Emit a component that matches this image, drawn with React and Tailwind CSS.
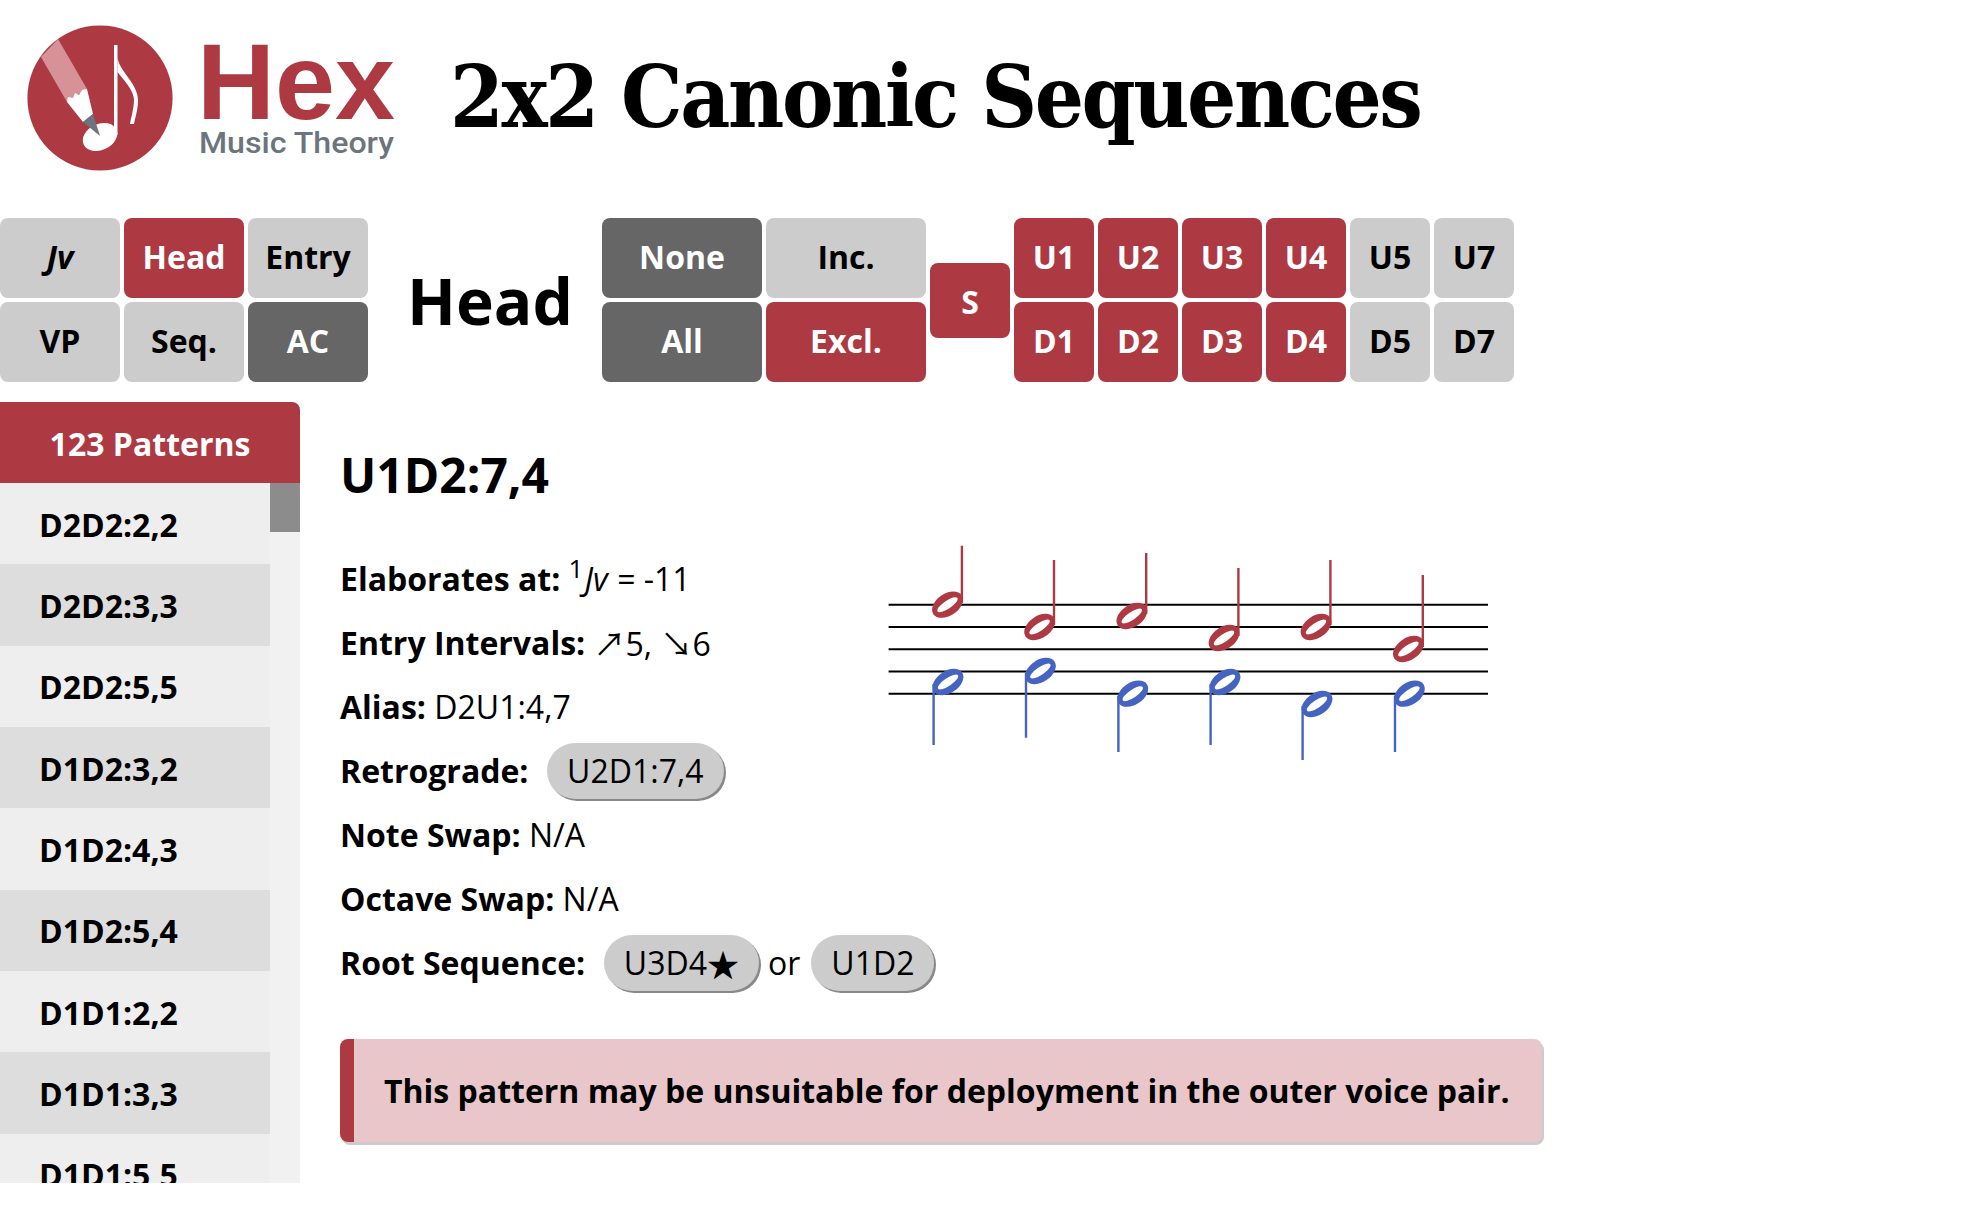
import React from 'react';

const RED = '#ad3a43';
const BLUE = '#4563c0';
const SANS = "font-['Open_Sans','Noto_Sans',sans-serif]";
const CJK = "font-['Noto_Sans_CJK_SC',sans-serif]";

const PATTERNS = [
  'D2D2:2,2', 'D2D2:3,3', 'D2D2:5,5', 'D1D2:3,2', 'D1D2:4,3',
  'D1D2:5,4', 'D1D1:2,2', 'D1D1:3,3', 'D1D1:5,5',
];

// cx/cy = notehead center, end = far end of the stem
const RED_NOTES = [
  { cx: 947.5, cy: 603.7, end: 544.7 },
  { cx: 1039.6, cy: 626, end: 559 },
  { cx: 1131.8, cy: 615, end: 552 },
  { cx: 1224, cy: 637, end: 567 },
  { cx: 1316, cy: 626, end: 559 },
  { cx: 1408.4, cy: 648, end: 574 },
];
const BLUE_NOTES = [
  { cx: 948, cy: 681, end: 744 },
  { cx: 1040.4, cy: 670, end: 736.7 },
  { cx: 1132.8, cy: 692.7, end: 751 },
  { cx: 1225, cy: 681, end: 744 },
  { cx: 1317, cy: 703, end: 759 },
  { cx: 1409.4, cy: 692.7, end: 751 },
];

const Logo = () => (
  <svg width="420" height="194" viewBox="0 0 420 194" className="shrink-0">
    <circle cx="100" cy="98" r="72.6" fill={RED} />
    <path d="M58 39 L41 57 L67 102 L87 89 Z" fill="#d69297" />
    <ellipse cx="100" cy="137" rx="18" ry="13" transform="rotate(-25 100 137)" fill="#fff" />
    <rect x="114" y="45" width="3.5" height="90" fill="#fff" />
    <path d="M117.5 58 C120 72 138 84 138 100 C138 110 135 118 134 124 L130 124 C131 118 134 108 134 100 C134 90 122 78 117.5 72 Z" fill="#fff" />
    <path d="M67 102 L68 97 L73 98 L75 93 L79 95 L82 90 L87 89 L93 114 L83 122 Z" fill="#fff" />
    <path d="M83 122 L93 114 L100 136 Z" fill="#6b757d" />
    <text x="197" y="119" fill={RED} fontSize="108" fontWeight="700" textLength="198" lengthAdjust="spacingAndGlyphs" fontFamily="'Liberation Sans', sans-serif">Hex</text>
    <text x="199" y="153" fill="#6b757d" fontSize="29" fontWeight="500" textLength="195" lengthAdjust="spacingAndGlyphs" fontFamily="Roboto, sans-serif">Music Theory</text>
  </svg>
);

const Btn = ({ label, tone = 'off', pad = 'pb-[3px]', className = '' }) => {
  const tones = {
    off: 'bg-[#cccccc] text-black',
    on: 'bg-[#ad3a43] text-white',
    dark: 'bg-[#666666] text-white',
  };
  return (
    <div className={`flex items-center justify-center rounded-lg text-[32px] font-bold ${pad} ${tones[tone]} ${className}`}>
      {label}
    </div>
  );
};

const Pill = ({ children }) => (
  <span className="ml-[2px] inline-flex h-14 items-center rounded-[28px] bg-[#cccccc] px-5 shadow-[2px_2px_0_#888888]">{children}</span>
);

const Line = ({ label, children }) => (
  <div className="flex h-16 items-center whitespace-pre">
    <b className="font-bold">{label}</b>
    {children}
  </div>
);

const HalfNote = ({ cx, cy, end, color, up }) => {
  const stemX = up ? cx + 14.4 : cx - 14.4;
  return (
    <g>
      <line x1={stemX} y1={cy + (up ? -2 : 2)} x2={stemX} y2={end} stroke={color} strokeWidth="2.4" />
      <g transform={`translate(${cx} ${cy}) rotate(-34)`}>
        <ellipse rx="17" ry="11" fill={color} />
        <ellipse rx="12" ry="4" fill="#fff" />
      </g>
    </g>
  );
};

const Staff = () => (
  <svg width="640" height="240" viewBox="860 530 640 240" className="shrink-0">
    {[603.7, 626, 648.2, 670.4, 692.7].map((y) => (
      <line key={y} x1="888.6" x2="1488" y1={y} y2={y} stroke="#000" strokeWidth="2" />
    ))}
    {RED_NOTES.map((n) => <HalfNote key={n.cx} {...n} color={RED} up />)}
    {BLUE_NOTES.map((n) => <HalfNote key={n.cx} {...n} color={BLUE} />)}
  </svg>
);

export default function App() {
  return (
    <div className={`${SANS} h-[1217px] bg-white text-black`}>
      <header className="flex h-[194px] items-center">
        <Logo />
        <h1 className="ml-[30px] whitespace-nowrap font-['DejaVu_Serif_Condensed','DejaVu_Serif',serif] text-[86px] font-bold leading-none tracking-[-2.4px]">
          2x2 Canonic Sequences
        </h1>
      </header>

      <div className="mt-6 flex h-[164px] items-center">
        <div className="grid grid-cols-[repeat(3,120px)] grid-rows-[repeat(2,80px)] gap-1">
          <Btn label={<i>Jv</i>} />
          <Btn label="Head" tone="on" />
          <Btn label="Entry" />
          <Btn label="VP" />
          <Btn label="Seq." />
          <Btn label="AC" tone="dark" />
        </div>
        <div className="w-[234px] pl-[10px] pt-[2px] text-center text-[64px] font-bold">Head</div>
        <div className="grid grid-cols-[repeat(2,160px)] grid-rows-[repeat(2,80px)] gap-1">
          <Btn label="None" tone="dark" />
          <Btn label="Inc." />
          <Btn label="All" tone="dark" />
          <Btn label="Excl." tone="on" />
        </div>
        <Btn label="S" tone="on" pad="pt-[3px]" className="ml-1 h-[75px] w-20" />
        <div className="ml-1 grid grid-cols-[repeat(6,80px)] grid-rows-[repeat(2,80px)] gap-1">
          {['U1', 'U2', 'U3', 'U4'].map((l) => <Btn key={l} label={l} tone="on" />)}
          <Btn label="U5" />
          <Btn label="U7" />
          {['D1', 'D2', 'D3', 'D4'].map((l) => <Btn key={l} label={l} tone="on" />)}
          <Btn label="D5" />
          <Btn label="D7" />
        </div>
      </div>

      <div className="mt-5 flex items-start">
        <aside className="w-[300px] shrink-0">
          <div className="flex h-[81px] items-center justify-center rounded-tr-lg bg-[#ad3a43] pt-[2px] text-[32px] font-bold text-white">
            123 Patterns
          </div>
          <div className="flex h-[700px] overflow-hidden bg-[#f1f1f1]">
            <div className="w-[270px] shrink-0">
              {PATTERNS.map((p, i) => (
                <div key={p} className={`flex h-[81.33px] items-center pl-[39px] pt-[2px] text-[32px] font-bold ${i % 2 ? 'bg-[#dddddd]' : 'bg-[#eeeeee]'}`}>
                  {p}
                </div>
              ))}
            </div>
            <div className="w-[30px]">
              <div className="h-[49px] bg-[#8c8c8c]" />
            </div>
          </div>
        </aside>

        <main className="ml-[40px] text-[32px]">
          <h2 className="mt-[32px] text-[48px] font-bold leading-[82px]">U1D2:7,4</h2>
          <div className="mt-[31px] flex">
            <div className="w-[520px] shrink-0">
              <Line label="Elaborates at: ">
                <span><sup className="text-[26px]">1</sup><i className="mx-[1px]">Jv</i> = -11</span>
              </Line>
              <Line label="Entry Intervals: "><span><span className={CJK}>↗</span>5, <span className={CJK}>↘</span>6</span></Line>
              <Line label="Alias: "><span>D2U1:4,7</span></Line>
              <Line label="Retrograde:  "><Pill>U2D1:7,4</Pill></Line>
              <Line label="Note Swap: "><span>N/A</span></Line>
              <Line label="Octave Swap: "><span>N/A</span></Line>
              <Line label="Root Sequence:  ">
                <Pill>U3D4<span className={CJK}>★</span></Pill>
                <span className="ml-[9px] mr-[9px]">or</span>
                <Pill>U1D2</Pill>
              </Line>
            </div>
            <div className="-mt-[16px]">
              <Staff />
            </div>
          </div>
          <div className="mt-[44px] w-[1202px] rounded-lg border-l-[14px] border-[#ad3a43] bg-[#e9c6c9] py-[29px] pl-[30px] font-bold leading-[45px] shadow-[2px_3px_0_#cccccc]">
            This pattern may be unsuitable for deployment in the outer voice pair.
          </div>
        </main>
      </div>
    </div>
  );
}
